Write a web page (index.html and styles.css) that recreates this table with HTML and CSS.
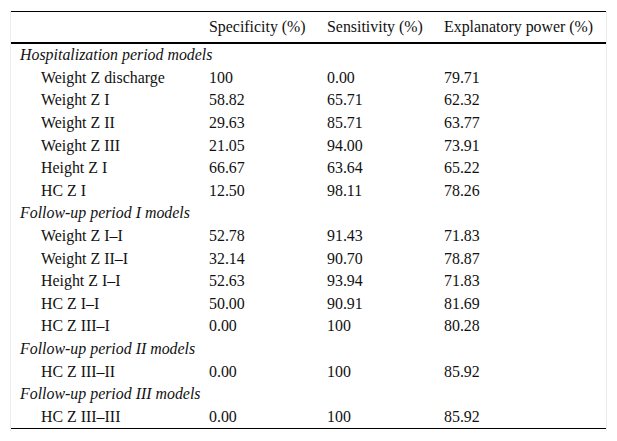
FILE: index.html
```html
<!DOCTYPE html>
<html>
<head>
<meta charset="utf-8">
<link rel="stylesheet" href="styles.css">
</head>
<body>
<div class="wrap">
<table class="tbl">
<colgroup>
<col class="c1"><col class="c2"><col class="c3"><col class="c4">
</colgroup>
<thead>
<tr><th></th><th>Specificity (%)</th><th>Sensitivity (%)</th><th>Explanatory power (%)</th></tr>
</thead>
<tbody>
<tr class="grp"><td colspan="4">Hospitalization period models</td></tr>
<tr><td class="ind">Weight Z discharge</td><td>100</td><td>0.00</td><td>79.71</td></tr>
<tr><td class="ind">Weight Z I</td><td>58.82</td><td>65.71</td><td>62.32</td></tr>
<tr><td class="ind">Weight Z II</td><td>29.63</td><td>85.71</td><td>63.77</td></tr>
<tr><td class="ind">Weight Z III</td><td>21.05</td><td>94.00</td><td>73.91</td></tr>
<tr><td class="ind">Height Z I</td><td>66.67</td><td>63.64</td><td>65.22</td></tr>
<tr><td class="ind">HC Z I</td><td>12.50</td><td>98.11</td><td>78.26</td></tr>
<tr class="grp"><td colspan="4">Follow-up period I models</td></tr>
<tr><td class="ind">Weight Z I–I</td><td>52.78</td><td>91.43</td><td>71.83</td></tr>
<tr><td class="ind">Weight Z II–I</td><td>32.14</td><td>90.70</td><td>78.87</td></tr>
<tr><td class="ind">Height Z I–I</td><td>52.63</td><td>93.94</td><td>71.83</td></tr>
<tr><td class="ind">HC Z I–I</td><td>50.00</td><td>90.91</td><td>81.69</td></tr>
<tr><td class="ind">HC Z III–I</td><td>0.00</td><td>100</td><td>80.28</td></tr>
<tr class="grp"><td colspan="4">Follow-up period II models</td></tr>
<tr><td class="ind">HC Z III–II</td><td>0.00</td><td>100</td><td>85.92</td></tr>
<tr class="grp"><td colspan="4">Follow-up period III models</td></tr>
<tr><td class="ind">HC Z III–III</td><td>0.00</td><td>100</td><td>85.92</td></tr>
</tbody>
</table>
</div>
</body>
</html>
```
FILE: styles.css
```css
html, body {
  margin: 0;
  padding: 0;
  background: #fff;
}
body {
  font-family: "Liberation Serif", "Times New Roman", serif;
  font-size: 15.9px;
  color: #111;
}
.wrap {
  margin: 11px 10px 0 10px;
  width: 597px;
  border-left: 1px solid #ececec;
  border-right: 1px solid #ececec;
  height: 420px;
  box-sizing: border-box;
}
.tbl {
  width: 595px;
  border-collapse: collapse;
  border-top: 1px solid #000;
  border-bottom: 1px solid #000;
  background: #fff;
}
.c1 { width: 189px; }
.c2 { width: 118px; }
.c3 { width: 117px; }
.c4 { width: auto; }
.tbl th {
  font-weight: normal;
  text-align: left;
  height: 30px;
  padding: 0 0 0 9px;
  border-bottom: 2px solid #000;
  vertical-align: middle;
}
.tbl td {
  height: 22.6px;
  padding: 0 0 0 9px;
  vertical-align: middle;
  white-space: nowrap;
}
.tbl td.ind {
  padding-left: 30px;
}
.grp td {
  font-style: italic;
}
```
